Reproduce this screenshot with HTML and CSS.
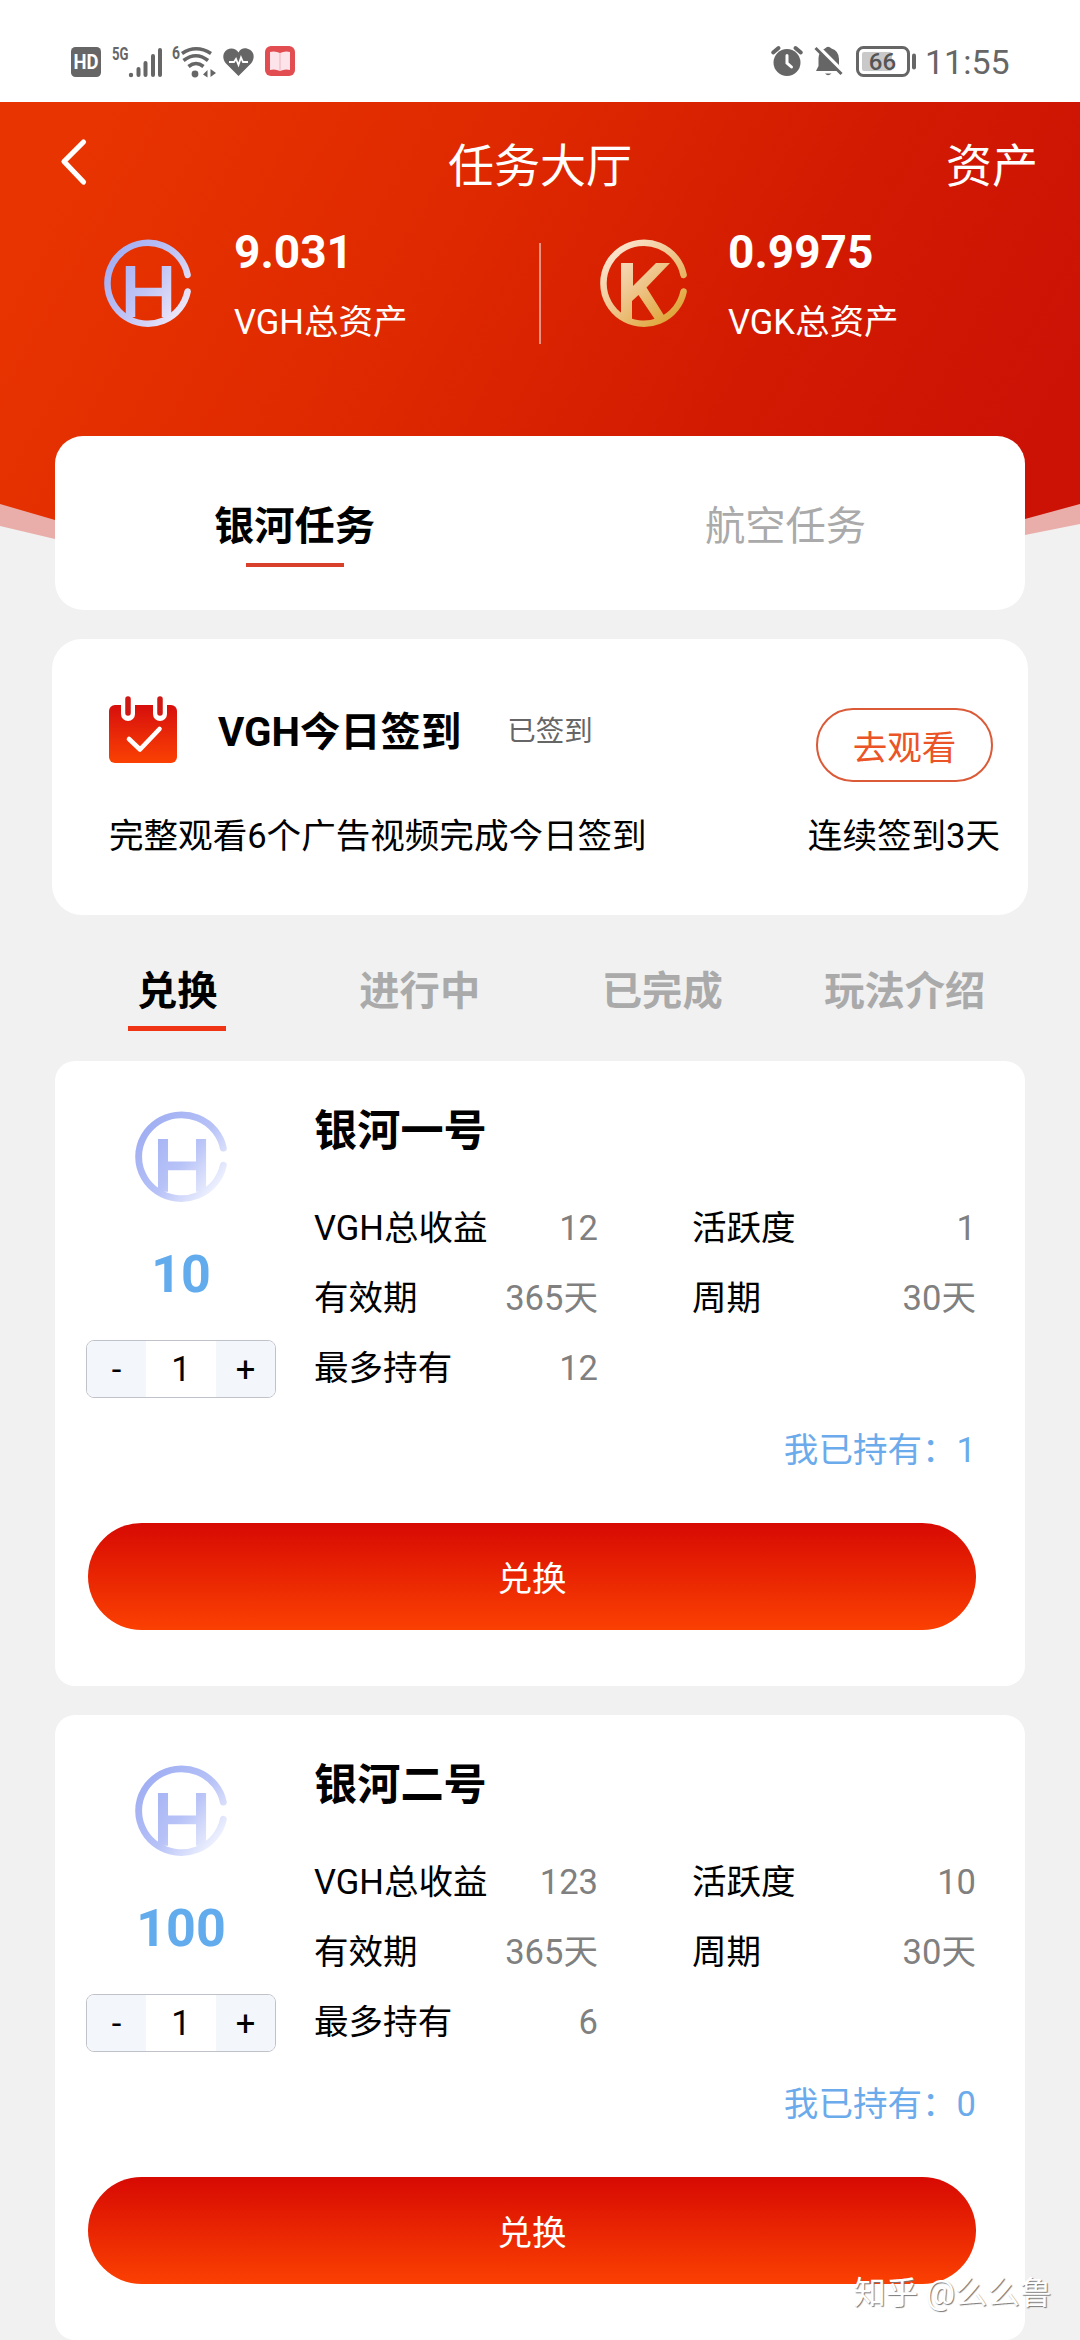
FILE: index.html
```html
<!DOCTYPE html>
<html lang="zh-CN">
<head>
<meta charset="utf-8">
<title>任务大厅</title>
<link rel="stylesheet" href="styles.css">
</head>
<body>
<svg class="defs" width="0" height="0" aria-hidden="true">
  <defs>
    <linearGradient id="silver" gradientUnits="userSpaceOnUse" x1="4" y1="20" x2="80" y2="76">
      <stop offset="0" stop-color="#a3adf2"/><stop offset=".5" stop-color="#c0c4f5"/><stop offset="1" stop-color="#f1e9f8"/>
    </linearGradient>
    <linearGradient id="periwinkle" gradientUnits="userSpaceOnUse" x1="8" y1="16" x2="78" y2="72">
      <stop offset="0" stop-color="#a0aff3"/><stop offset=".55" stop-color="#b7c2f7"/><stop offset="1" stop-color="#eef1fe"/>
    </linearGradient>
    <linearGradient id="gold" gradientUnits="userSpaceOnUse" x1="10" y1="14" x2="70" y2="80">
      <stop offset="0" stop-color="#fbe3cd"/><stop offset=".5" stop-color="#eec489"/><stop offset="1" stop-color="#dfa63a"/>
    </linearGradient>
    <linearGradient id="calendar" x1="0" y1="0" x2="0" y2="1">
      <stop offset="0" stop-color="#d60f0d"/><stop offset="1" stop-color="#fb4103"/>
    </linearGradient>
    <g id="coin-h">
      <path d="M83.600 35A40.500 40.500 0 1 0 83.600 51.500" fill="none" stroke-width="6.500" stroke-linecap="round"/>
      <path d="M26.500 26V77M62.500 26V77" fill="none" stroke-width="9.500"/>
      <path d="M26 52H62.500" fill="none" stroke-width="8.500"/>
    </g>
  </defs>
</svg>

<div class="status">
  <div class="status-group">
    <svg class="st-hd" width="30" height="30" viewBox="0 0 30 30"><rect width="30" height="30" rx="4.500" fill="#666"/><text x="15" y="22" text-anchor="middle" textLength="25" lengthAdjust="spacingAndGlyphs" class="hd-text">HD</text></svg>
    <svg class="st-signal" width="50" height="32" viewBox="0 0 50 32">
      <text x="0" y="13.500" class="net-text" textLength="16.500" lengthAdjust="spacingAndGlyphs">5G</text>
      <path d="M26.500 29V23M33.500 29V17M41 29V10M48 29V4" stroke="#666" stroke-width="4" stroke-linecap="round"/><circle cx="19" cy="29" r="2.200" fill="#666"/>
    </svg>
    <svg class="st-wifi" width="45" height="32" viewBox="0 0 45 32">
      <text x="0" y="13" class="net-text" textLength="8" lengthAdjust="spacingAndGlyphs">6</text>
      <g fill="none" stroke="#666" stroke-width="3.600"><path d="M10 7.500Q24 -2 39 7.500"/><path d="M11.500 14.500Q24 5 36 14.500"/><path d="M16.500 20.500Q24 14.500 31.500 20.500"/></g>
      <circle cx="23" cy="28" r="3.400" fill="#666"/><path d="M35.500 24V31.500L31 28.500ZM38.500 23L44 27L38.500 31Z" fill="#666"/>
    </svg>
    <svg class="st-heart" width="31" height="29" viewBox="0 0 31 29"><path d="M15.500 28L3 15.500C-1 11-.5 4.500 4 1.800C8-.6 13 .5 15.500 4.500C18-.5 23-.6 27 1.800C31.500 4.500 32 11 28 15.500Z" fill="#666"/><path d="M6 14H11L13 11L15.500 17L18 9.500L20 14H25" fill="none" stroke="#fff" stroke-width="1.800"/></svg>
    <svg class="st-book" width="30" height="30" viewBox="0 0 30 30"><rect width="30" height="30" rx="6" fill="#e14d50"/><path d="M5 6Q10 4.500 15 7Q20 4.500 25 6V24Q20 22.500 15 25Q10 22.500 5 24Z" fill="#fde4ea"/><path d="M15 7V25" stroke="#f1b9c2" stroke-width="1.200"/></svg>
  </div>
  <div class="status-group">
    <svg width="32" height="30" viewBox="0 0 32 30"><circle cx="16" cy="16.500" r="13.500" fill="#666"/><path d="M2.200 6.500L7.500 2M29.800 6.500L24.500 2" stroke="#666" stroke-width="4" stroke-linecap="round"/><path d="M16 9.500V17L20.500 21" fill="none" stroke="#fff" stroke-width="3" stroke-linecap="round"/></svg>
    <svg class="st-bell" width="30" height="31" viewBox="0 0 30 31"><path d="M11 2.500Q14 -1 17.500 2.500Q25 5 25 13V19L27.500 25H2L4.500 20V12Q5 5 11 2.500Z" fill="#666"/><path d="M11 27.500H17.500Q14 31 11 27.500Z" fill="#666"/><path d="M3 0L30 27" stroke="#fff" stroke-width="4"/><path d="M1.500 2L27.500 28" stroke="#666" stroke-width="3"/></svg>
    <svg class="st-battery" width="61" height="31" viewBox="0 0 61 31"><rect x="1.500" y="1.500" width="51" height="28" rx="6" fill="#fff" stroke="#666" stroke-width="3"/><rect x="6" y="6" width="30" height="19" rx="2" fill="#c9c9c9"/><rect x="56" y="7.500" width="4" height="16" rx="2" fill="#666"/><text x="26.500" y="24" text-anchor="middle" class="battery-text">66</text></svg>
    <span class="clock">11:55</span>
  </div>
</div>

<div class="page">
  <div class="backdrop"><div class="backdrop-soft"></div><div class="backdrop-main"></div></div>

  <header class="nav">
    <svg class="back" width="30" height="50" viewBox="0 0 30 50"><path d="M23.500 5L4 24.500L23.500 45" fill="none" stroke="#fff" stroke-width="5.200" stroke-linecap="round" stroke-linejoin="round"/></svg>
    <h1 class="nav-title">任务大厅</h1>
    <span class="nav-link">资产</span>
  </header>

  <section class="assets">
    <div class="asset">
      <svg class="coin" width="88" height="88" viewBox="0 0 88 88" stroke="url(#silver)"><use href="#coin-h"/></svg>
      <div class="asset-info"><strong class="asset-value">9.031</strong><span class="asset-name">VGH总资产</span></div>
    </div>
    <div class="divider"></div>
    <div class="asset">
      <svg class="coin" width="88" height="88" viewBox="0 0 88 88"><path d="M83.600 35A40.500 40.500 0 1 0 83.600 51.500" fill="none" stroke="url(#gold)" stroke-width="6.500" stroke-linecap="round"/><path d="M21 23H33V46L56 23H70L46.500 47.500L65 77L56 81L38.500 55L32 61V82L21 76Z" fill="url(#gold)"/></svg>
      <div class="asset-info"><strong class="asset-value">0.9975</strong><span class="asset-name">VGK总资产</span></div>
    </div>
  </section>

  <nav class="card switcher">
    <div class="switch active">银河任务</div>
    <div class="switch">航空任务</div>
  </nav>

  <section class="card signin">
    <div class="signin-top">
      <svg class="calendar" width="68" height="68" viewBox="0 0 68 68"><rect y="9" width="68" height="58" rx="6" fill="url(#calendar)"/><path d="M19 9V18M51 9V18" stroke="#fff" stroke-width="14" stroke-linecap="round"/><path d="M19 3V17M51 3V17" stroke="#cf1713" stroke-width="5.500" stroke-linecap="round"/><path d="M20 43L31 53.500L50.500 33" fill="none" stroke="#fff" stroke-width="4.600" stroke-linecap="round" stroke-linejoin="round"/></svg>
      <h2 class="signin-title">VGH今日签到</h2>
      <span class="signin-state">已签到</span>
      <button class="watch">去观看</button>
    </div>
    <div class="signin-bottom"><span>完整观看6个广告视频完成今日签到</span><span>连续签到3天</span></div>
  </section>

  <nav class="tabs">
    <div class="tab active">兑换</div>
    <div class="tab">进行中</div>
    <div class="tab">已完成</div>
    <div class="tab">玩法介绍</div>
  </nav>

  <section class="card product">
    <div class="product-body">
      <div class="product-side">
        <svg class="coin-large" width="93" height="91" viewBox="0 0 88 88" preserveAspectRatio="none" stroke="url(#periwinkle)"><use href="#coin-h"/></svg>
        <strong class="price">10</strong>
        <div class="stepper"><button class="step">-</button><span class="count">1</span><button class="step">+</button></div>
      </div>
      <div class="product-main">
        <h3 class="product-title">银河一号</h3>
        <dl class="specs">
          <div class="spec"><dt>VGH总收益</dt><dd>12</dd></div>
          <div class="spec"><dt>活跃度</dt><dd>1</dd></div>
          <div class="spec"><dt>有效期</dt><dd>365天</dd></div>
          <div class="spec"><dt>周期</dt><dd>30天</dd></div>
          <div class="spec"><dt>最多持有</dt><dd>12</dd></div>
        </dl>
        <p class="held">我已持有：1</p>
      </div>
    </div>
    <button class="redeem">兑换</button>
  </section>

  <section class="card product">
    <div class="product-body">
      <div class="product-side">
        <svg class="coin-large" width="93" height="91" viewBox="0 0 88 88" preserveAspectRatio="none" stroke="url(#periwinkle)"><use href="#coin-h"/></svg>
        <strong class="price">100</strong>
        <div class="stepper"><button class="step">-</button><span class="count">1</span><button class="step">+</button></div>
      </div>
      <div class="product-main">
        <h3 class="product-title">银河二号</h3>
        <dl class="specs">
          <div class="spec"><dt>VGH总收益</dt><dd>123</dd></div>
          <div class="spec"><dt>活跃度</dt><dd>10</dd></div>
          <div class="spec"><dt>有效期</dt><dd>365天</dd></div>
          <div class="spec"><dt>周期</dt><dd>30天</dd></div>
          <div class="spec"><dt>最多持有</dt><dd>6</dd></div>
        </dl>
        <p class="held">我已持有：0</p>
      </div>
    </div>
    <button class="redeem">兑换</button>
  </section>
  <div class="watermark">知乎 @么么鲁</div>
</div>
</body>
</html>
```
FILE: styles.css
```css
* {
  box-sizing: border-box;
}

body {
  margin: 0;
  width: 1080px;
  height: 2340px;
  overflow: hidden;
  background: #f1f1f1;
  color: #000;
  font-family: Roboto, "Noto Sans CJK SC", sans-serif;
  font-size: 34.56px;
  line-height: 48px;
}

h1, h2, h3, p, dl, dd {
  margin: 0;
  font-size: inherit;
  font-weight: inherit;
}

button {
  padding: 0;
  border: 0;
  background: none;
  color: inherit;
  font: inherit;
}

svg {
  display: block;
  flex: none;
  overflow: visible;
}

.defs {
  position: absolute;
}

/* Status bar */
.status {
  display: flex;
  justify-content: space-between;
  height: 102px;
  padding: 46px 69px 0 71px;
  background: #fff;
  color: #666;
}

.status-group {
  display: flex;
  align-items: flex-start;
}

.st-hd { margin-top: 1px; }
.st-signal { margin-left: 11px; }
.st-wifi { margin-left: 10px; }
.st-heart { margin: 2px 0 0 6px; }
.st-book { margin-left: 11px; }
.st-bell { margin-left: 11px; }
.st-battery { margin-left: 12px; }

.hd-text {
  fill: #fff;
  font: 700 20px Roboto, sans-serif;
}

.net-text {
  fill: #666;
  font: 700 18px Roboto, sans-serif;
}

.battery-text {
  fill: #555;
  font: 500 24px Roboto, sans-serif;
}

.clock {
  width: 86px;
  margin-left: 8px;
  font-size: 34px;
  line-height: 33px;
}

/* Page */
.page {
  position: relative;
  height: 2238px;
}

.backdrop {
  position: absolute;
  inset: 0 0 auto;
  height: 500px;
  z-index: -1;
}

.backdrop-main,
.backdrop-soft {
  position: absolute;
  inset: 0;
}

.backdrop-main {
  background: linear-gradient(120deg, #e83400 8%, #de2800 40%, #d21a02 66%, #cc1205 90%);
  clip-path: polygon(0 0, 100% 0, 100% 402px, 1025px 417px, 860px 460px, 220px 460px, 55px 418px, 0 402px);
}

.backdrop-soft {
  background: #e9aeaa;
  clip-path: polygon(0 0, 100% 0, 100% 422px, 1025px 433px, 860px 470px, 220px 470px, 55px 437px, 0 424px);
}

.nav {
  display: grid;
  grid-template-columns: 1fr auto 1fr;
  align-items: center;
  height: 128px;
  padding: 0 44px 0 60px;
  color: #fff;
  font-size: 46px;
}

.nav-title {
  padding-left: 16px;
  margin-right: 32px;
}

.back {
  margin-bottom: 8px;
}

.nav-link {
  justify-self: end;
  margin-right: -2px;
}

.assets {
  display: grid;
  grid-template-columns: 539px 2px 1fr;
  height: 206px;
  color: #fff;
}

.asset {
  display: flex;
  gap: 42px;
  padding: 10px 0 0 104px;
}

.asset:last-child {
  gap: 40px;
  padding-left: 59px;
}

.divider {
  height: 101px;
  margin-top: 13px;
  background: rgba(255, 255, 255, .5);
}

.asset-info {
  display: flex;
  flex-direction: column;
  gap: 20px;
  margin-top: -13px;
}

.asset-value {
  font-size: 46px;
  line-height: 50px;
}

.asset-name {
  line-height: 50px;
}

.card {
  margin: 0 55px 29px;
  background: #fff;
}

.switcher {
  display: grid;
  grid-template-columns: 491px 491px;
  justify-content: center;
  height: 174px;
  border-radius: 28px;
  color: #aaa;
  font-size: 40.3px;
}

.switch {
  padding-top: 67px;
  text-align: center;
}

.switch.active,
.tab.active {
  color: #000;
}

.switch.active {
  font-weight: 700;
}

.switch.active::after,
.tab.active::after {
  content: "";
  display: block;
  width: 98px;
  height: 4px;
  margin: 12px auto 0;
  background: #d9402c;
}

.signin {
  height: 276px;
  margin: 0 52px;
  padding: 57px 28px 0 57px;
  border-radius: 30px;
}

.signin-top {
  display: flex;
  height: 87px;
}

.signin-title {
  margin: 13px 46px 0 41px;
  font-size: 40.3px;
  font-weight: 700;
}

.signin-state {
  margin-top: 12px;
  color: #666;
  font-size: 28.5px;
}

.watch {
  width: 177px;
  height: 74px;
  margin: 12px 7px 0 auto;
  padding-top: 5px;
  border: 2px solid #db5a38;
  border-radius: 37px;
  color: #ea5426;
}

.signin-bottom {
  display: flex;
  justify-content: space-between;
  margin-top: 29px;
}

.tabs {
  display: grid;
  grid-template-columns: repeat(4, 1fr);
  height: 146px;
  padding: 53px 54px 0 56px;
  color: #aaa;
  font-size: 40.3px;
  font-weight: 700;
  text-align: center;
}

.tab.active::after {
  height: 5px;
  margin-top: 10px;
  background: #f03416;
}

/* Product card */
.product {
  height: 625px;
  padding: 44px 49px 0 31px;
  border-radius: 20px;
}

.product-body {
  display: grid;
  grid-template-columns: 190px 1fr;
  column-gap: 38px;
  height: 418px;
}

.product-side {
  display: flex;
  flex-direction: column;
  align-items: center;
}

.coin-large {
  margin-top: 7px;
}

.price {
  margin-top: 42px;
  color: #62abec;
  font-size: 52px;
  line-height: 60px;
}

.stepper {
  display: grid;
  grid-template-columns: 59px 1fr 59px;
  width: 190px;
  height: 58px;
  margin-top: 35px;
  overflow: hidden;
  border: 1px solid #bfc2c8;
  border-radius: 8px;
  line-height: 56px;
  text-align: center;
}

.step {
  background: #f3f6fb;
  line-height: 56px;
}

.product-title {
  padding-top: 3px;
  font-size: 43.2px;
  font-weight: 700;
}

.specs {
  display: grid;
  grid-template-columns: 284px 284px;
  justify-content: space-between;
  row-gap: 22px;
  width: 662px;
  margin-top: 48px;
}

.spec {
  display: flex;
  justify-content: space-between;
}

.spec dd {
  color: #808080;
}

.held {
  margin-top: 34px;
  color: #6babeb;
  text-align: right;
}

.redeem {
  display: block;
  width: 888px;
  height: 107px;
  margin-left: 2px;
  padding-top: 5px;
  border-radius: 54px;
  background: linear-gradient(#d70a03, #fb4002);
  color: #fff;
}

.watermark {
  position: absolute;
  right: 28px;
  bottom: 23px;
  color: #fff;
  font-size: 32.3px;
  text-shadow: 1px 1px 1px #777;
}
```
